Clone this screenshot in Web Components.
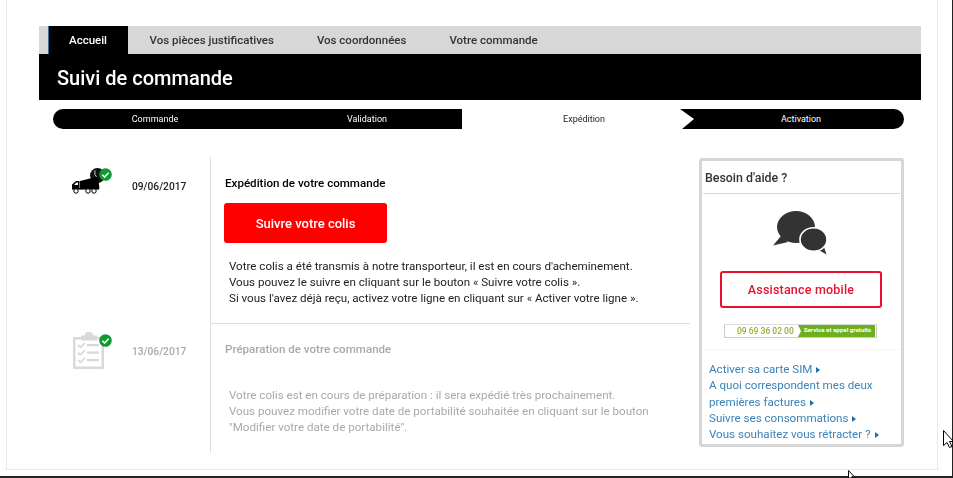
<!DOCTYPE html>
<html lang="fr">
<head>
<meta charset="utf-8">
<title>Suivi de commande</title>
<style>
  html, body { margin: 0; height: 100%; background: #fff; }
  body { font-family: Roboto, "Liberation Sans", sans-serif; overflow: hidden; }
</style>
</head>
<body>
<suivi-page>
  <tab-bar slot="tabs">
    <tab-item active>Accueil</tab-item>
    <tab-item>Vos pièces justificatives</tab-item>
    <tab-item>Vos coordonnées</tab-item>
    <tab-item>Votre commande</tab-item>
  </tab-bar>
  <span slot="title">Suivi de commande</span>
  <step-bar slot="steps"></step-bar>

  <order-step slot="timeline" date="09/06/2017" title-text="Expédition de votre commande" active>
    <svg slot="icon" width="36" height="28" viewBox="0 0 36 28">
      <circle cx="26.500" cy="7.500" r="7.500" fill="#111"/>
      <path d="M24 2.500a6.500 6.500 0 0 0 2 7" fill="none" stroke="#fff" stroke-width=".8"/>
      <path d="M9 13l18-4.500 1.500 12H9z" fill="#000"/>
      <path d="M1 21v-4.500l4-3.500h3.500v8z" fill="#000"/>
      <path d="M3 17l2.500-2.500h1.500V17z" fill="#fff"/>
      <path d="M1 20h27v1.600H1z" fill="#000"/>
      <circle cx="5" cy="23" r="2.200" fill="#fff" stroke="#000"/>
      <circle cx="17" cy="23" r="2.200" fill="#fff" stroke="#000"/>
      <circle cx="23" cy="23" r="2.200" fill="#fff" stroke="#000"/>
    </svg>
    <red-button>Suivre votre colis</red-button>
    <p>Votre colis a été transmis à notre transporteur, il est en cours d'acheminement.<br>
    Vous pouvez le suivre en cliquant sur le bouton « Suivre votre colis ».<br>
    Si vous l'avez déjà reçu, activez votre ligne en cliquant sur « Activer votre ligne ».</p>
  </order-step>

  <order-step slot="timeline" date="13/06/2017" title-text="Préparation de votre commande">
    <svg slot="icon" width="31" height="40" viewBox="0 0 31 40" fill="#d9d9d9">
      <path fill-rule="evenodd" d="M1 8h29a1 1 0 0 1 1 1v30a1 1 0 0 1-1 1H1a1 1 0 0 1-1-1V9a1 1 0 0 1 1-1zm1.500 2.500v27h26v-27z"/>
      <path d="M8 11.500V6.500h3.500a4.600 4.600 0 0 1 9 0H24v5z"/>
      <path d="M5 16l2.300 2.300L12 13.800M5 23.500l2.300 2.300L12 21.300M5 31l2.300 2.300L12 28.800" fill="none" stroke="#d9d9d9" stroke-width="1.800"/>
      <path d="M14 15h12v2.200H14zM14 22.600h12v2.200H14zM14 30h12v2.200H14z"/>
    </svg>
    <p class="late">Votre colis est en cours de préparation : il sera expédié très prochainement.<br>
    Vous pouvez modifier votre date de portabilité souhaitée en cliquant sur le bouton<br>
    "Modifier votre date de portabilité".</p>
  </order-step>

  <help-panel slot="aside">
    <help-link>Activer sa carte SIM</help-link>
    <help-link>A quoi correspondent mes deux premières factures</help-link>
    <help-link>Suivre ses consommations</help-link>
    <help-link>Vous souhaitez vous rétracter ?</help-link>
  </help-panel>
</suivi-page>

<script>
class SuiviPage extends HTMLElement {
  constructor() {
    super();
    this.attachShadow({ mode: "open" });
    this.shadowRoot.innerHTML = `
      <style>
        :host { display: block; height: 478px; position: relative; overflow: hidden; }
        .frame {
          box-sizing: border-box;
          width: 932px;
          height: 470px;
          margin-left: 6px;
          padding: 26px 16px 0 32px;
          border: 1px solid #e9e9e9;
          border-top: 0;
          filter: blur(.3px);
        }
        .band {
          height: 46px;
          background: #000;
          color: #fff;
          font-size: 20px;
          font-weight: 500;
          line-height: 48px;
          padding-left: 18px;
        }
        .body { display: flex; margin-top: 28px; }
        .timeline { width: 651px; }
        .strip { position: absolute; left: 0; right: 0; bottom: 0; height: 2px; background: #252525; }
        .edge { position: absolute; right: 0; top: 0; bottom: 0; width: 1px; background: #222; }
        .cursor { position: absolute; }
      </style>
      <div class="frame">
        <slot name="tabs"></slot>
        <div class="band"><slot name="title"></slot></div>
        <slot name="steps"></slot>
        <div class="body">
          <div class="timeline"><slot name="timeline"></slot></div>
          <slot name="aside"></slot>
        </div>
      </div>
      <div class="strip"></div>
      <div class="edge"></div>
      <svg class="cursor" style="left:943px;top:430px" width="10" height="18" viewBox="0 0 10 18">
        <path d="M.5.500v15l3.500-3 2.500 5 2.500-1-2.500-5h4z" fill="#fff" stroke="#000"/>
      </svg>
      <svg class="cursor" style="left:848px;top:470px" width="8" height="8" viewBox="0 0 8 8">
        <path d="M.5.500v7.500h3l1-2 2 2h1z" fill="#fff" stroke="#000"/>
      </svg>
    `;
  }
}

class TabBar extends HTMLElement {
  constructor() {
    super();
    this.attachShadow({ mode: "open" });
    this.shadowRoot.innerHTML = `
      <style>
        :host {
          display: flex;
          height: 28px;
          padding-left: 9px;
          background: #d7d7d7;
        }
      </style>
      <slot></slot>
    `;
  }
}

class TabItem extends HTMLElement {
  constructor() {
    super();
    this.attachShadow({ mode: "open" });
    this.shadowRoot.innerHTML = `
      <style>
        :host {
          display: block;
          padding: 0 21.500px;
          font-size: 11.500px;
          font-weight: 500;
          line-height: 29px;
          color: #333;
        }
        :host([active]) {
          background: #000;
          color: #fff;
          border-left: 1px solid #3b6f9e;
          padding: 0 21px 0 20px;
        }
      </style>
      <slot></slot>
    `;
  }
}

class StepBar extends HTMLElement {
  constructor() {
    super();
    this.attachShadow({ mode: "open" });
    this.shadowRoot.innerHTML = `
      <style>
        :host {
          display: grid;
          grid-template-columns: 204px 205px 218px 224px;
          height: 20px;
          margin: 9px 17px 0 14px;
          font-size: 9px;
          line-height: 20px;
          text-align: center;
          color: #fff;
        }
        div { background: #000; }
        .first { border-radius: 10px 0 0 10px; }
        .second { padding-left: 15px; }
        .current { background: #fff; color: #222; padding-left: 26px; }
        .last {
          border-radius: 0 10px 10px 0;
          clip-path: polygon(0 0, 100% 0, 100% 100%, 2px 100%, 14px 50%);
          padding-left: 18px;
        }
      </style>
      <div class="first">Commande</div>
      <div class="second">Validation</div>
      <div class="current">Expédition</div>
      <div class="last">Activation</div>
    `;
  }
}

class OrderStep extends HTMLElement {
  constructor() {
    super();
    this.attachShadow({ mode: "open" });
    const active = this.hasAttribute("active");
    this.shadowRoot.innerHTML = `
      <style>
        :host {
          display: grid;
          grid-template-columns: 171px 1fr;
          box-sizing: border-box;
          height: ${active ? 166 : 130}px;
          color: ${active ? "#222" : "#a9a9a9"};
        }
        .side { display: flex; align-items: flex-start; padding-top: ${active ? 11 : 6}px; }
        .icon {
          position: relative;
          width: 93px;
          box-sizing: border-box;
          padding-left: ${active ? 32 : 34}px;
          line-height: 0;
        }
        .badge { position: absolute; left: 60px; top: ${active ? 0 : 5}px; }
        .date { margin-top: ${active ? 13 : 17}px; font-size: 10.200px; font-weight: 500; }
        .main { border-left: 1px solid #ddd; padding-left: 14px; ${active ? "" : "border-top: 1px solid #ddd;"} }
        h3 {
          margin: 0 0 ${active ? 12 : 30}px;
          padding-top: ${active ? 18 : 17}px;
          font-size: 11.600px;
          font-weight: 500;
          line-height: 16px;
          color: ${active ? "#000" : "#a9a9a9"};
        }
        ::slotted(p) { margin: 0 0 0 4px; font-size: 11.600px; line-height: 16px; }
      </style>
      <div class="side">
        <div class="icon">
          <slot name="icon"></slot>
          <svg class="badge" width="13" height="13" viewBox="0 0 13 13">
            <circle cx="6.500" cy="6.500" r="6.300" fill="#0d9a2f"/>
            <path d="M3.300 6.700l2.300 2.300 4-4.300" fill="none" stroke="#fff" stroke-width="1.600"/>
          </svg>
        </div>
        <div class="date">${this.getAttribute("date")}</div>
      </div>
      <div class="main">
        <h3>${this.getAttribute("title-text")}</h3>
        <slot></slot>
      </div>
    `;
  }
}

class RedButton extends HTMLElement {
  constructor() {
    super();
    this.attachShadow({ mode: "open" });
    this.shadowRoot.innerHTML = `
      <style>
        :host {
          display: block;
          width: 163px;
          height: 40px;
          margin: 0 0 15px -1px;
          background: #f00;
          border-radius: 3px;
          color: #fff;
          font-size: 13px;
          font-weight: 500;
          line-height: 41px;
          text-align: center;
        }
      </style>
      <slot></slot>
    `;
  }
}

class HelpPanel extends HTMLElement {
  constructor() {
    super();
    this.attachShadow({ mode: "open" });
    this.shadowRoot.innerHTML = `
      <style>
        :host {
          display: block;
          box-sizing: border-box;
          width: 205px;
          height: 289px;
          margin: 1px 0 0 9px;
          padding: 0 1px;
          border: 3px solid #d6d6d6;
          border-radius: 3px;
          color: #333;
        }
        h2 {
          margin: 0;
          height: 32px;
          padding: 0 0 0 2px;
          border-bottom: 1px solid #d8d8d8;
          font-size: 12.400px;
          font-weight: 500;
          line-height: 33px;
        }
        svg.chat { display: block; margin: 17px 0 0 70px; }
        .assist {
          box-sizing: border-box;
          width: 162px;
          height: 37px;
          margin: 16px 0 0 17px;
          border: 2px solid #e8112d;
          border-radius: 3px;
          color: #e8112d;
          font-size: 12.500px;
          font-weight: 500;
          line-height: 34px;
          text-align: center;
          letter-spacing: .2px;
        }
        .phone {
          display: flex;
          box-sizing: border-box;
          width: 153px;
          height: 14px;
          margin: 16px 0 0 21px;
          border: 1px solid #ccc;
          border-top-color: #ddd;
        }
        .num {
          box-sizing: border-box;
          width: 73px;
          padding-left: 12px;
          font-size: 8.500px;
          font-weight: 500;
          line-height: 12px;
          white-space: nowrap;
          color: #9aab3a;
        }
        .free {
          flex: 1;
          height: 12px;
          margin-right: 1px;
          padding-left: 2px;
          background: #6cb01d;
          clip-path: polygon(0 0, 100% 0, 100% 100%, 0 100%, 3px 50%);
          color: #fff;
          font-size: 6.200px;
          font-weight: 700;
          line-height: 11px;
          text-align: center;
          white-space: nowrap;
        }
        .links {
          margin-top: 11px;
          padding: 11px 0 0 6px;
          border-top: 1px solid #f6f6f6;
        }
      </style>
      <h2>Besoin d'aide ?</h2>
      <svg class="chat" width="54" height="44" viewBox="0 0 54 44" fill="#333">
        <ellipse cx="23" cy="16" rx="19" ry="16"/>
        <path d="M8 25L0 34.500 15 31z"/>
        <path d="M44 38l9.500 5.500L50 33z"/>
        <ellipse cx="40.500" cy="28.500" rx="13.500" ry="11.800" stroke="#fff" stroke-width="1.600"/>
      </svg>
      <div class="assist">Assistance mobile</div>
      <div class="phone">
        <div class="num">09 69 36 02 00</div>
        <div class="free">Service et appel gratuits</div>
      </div>
      <div class="links"><slot></slot></div>
    `;
  }
}

class HelpLink extends HTMLElement {
  constructor() {
    super();
    this.attachShadow({ mode: "open" });
    this.shadowRoot.innerHTML = `
      <style>
        :host {
          display: block;
          width: 182px;
          font-size: 11.600px;
          line-height: 16.300px;
          color: #3a82b8;
        }
        i {
          display: inline-block;
          margin-left: 4px;
          border-left: 4px solid #1f6fa8;
          border-top: 3px solid transparent;
          border-bottom: 3px solid transparent;
        }
      </style>
      <slot></slot><i></i>
    `;
  }
}

customElements.define("suivi-page", SuiviPage);
customElements.define("tab-bar", TabBar);
customElements.define("tab-item", TabItem);
customElements.define("step-bar", StepBar);
customElements.define("order-step", OrderStep);
customElements.define("red-button", RedButton);
customElements.define("help-panel", HelpPanel);
customElements.define("help-link", HelpLink);
</script>
</body>
</html>
